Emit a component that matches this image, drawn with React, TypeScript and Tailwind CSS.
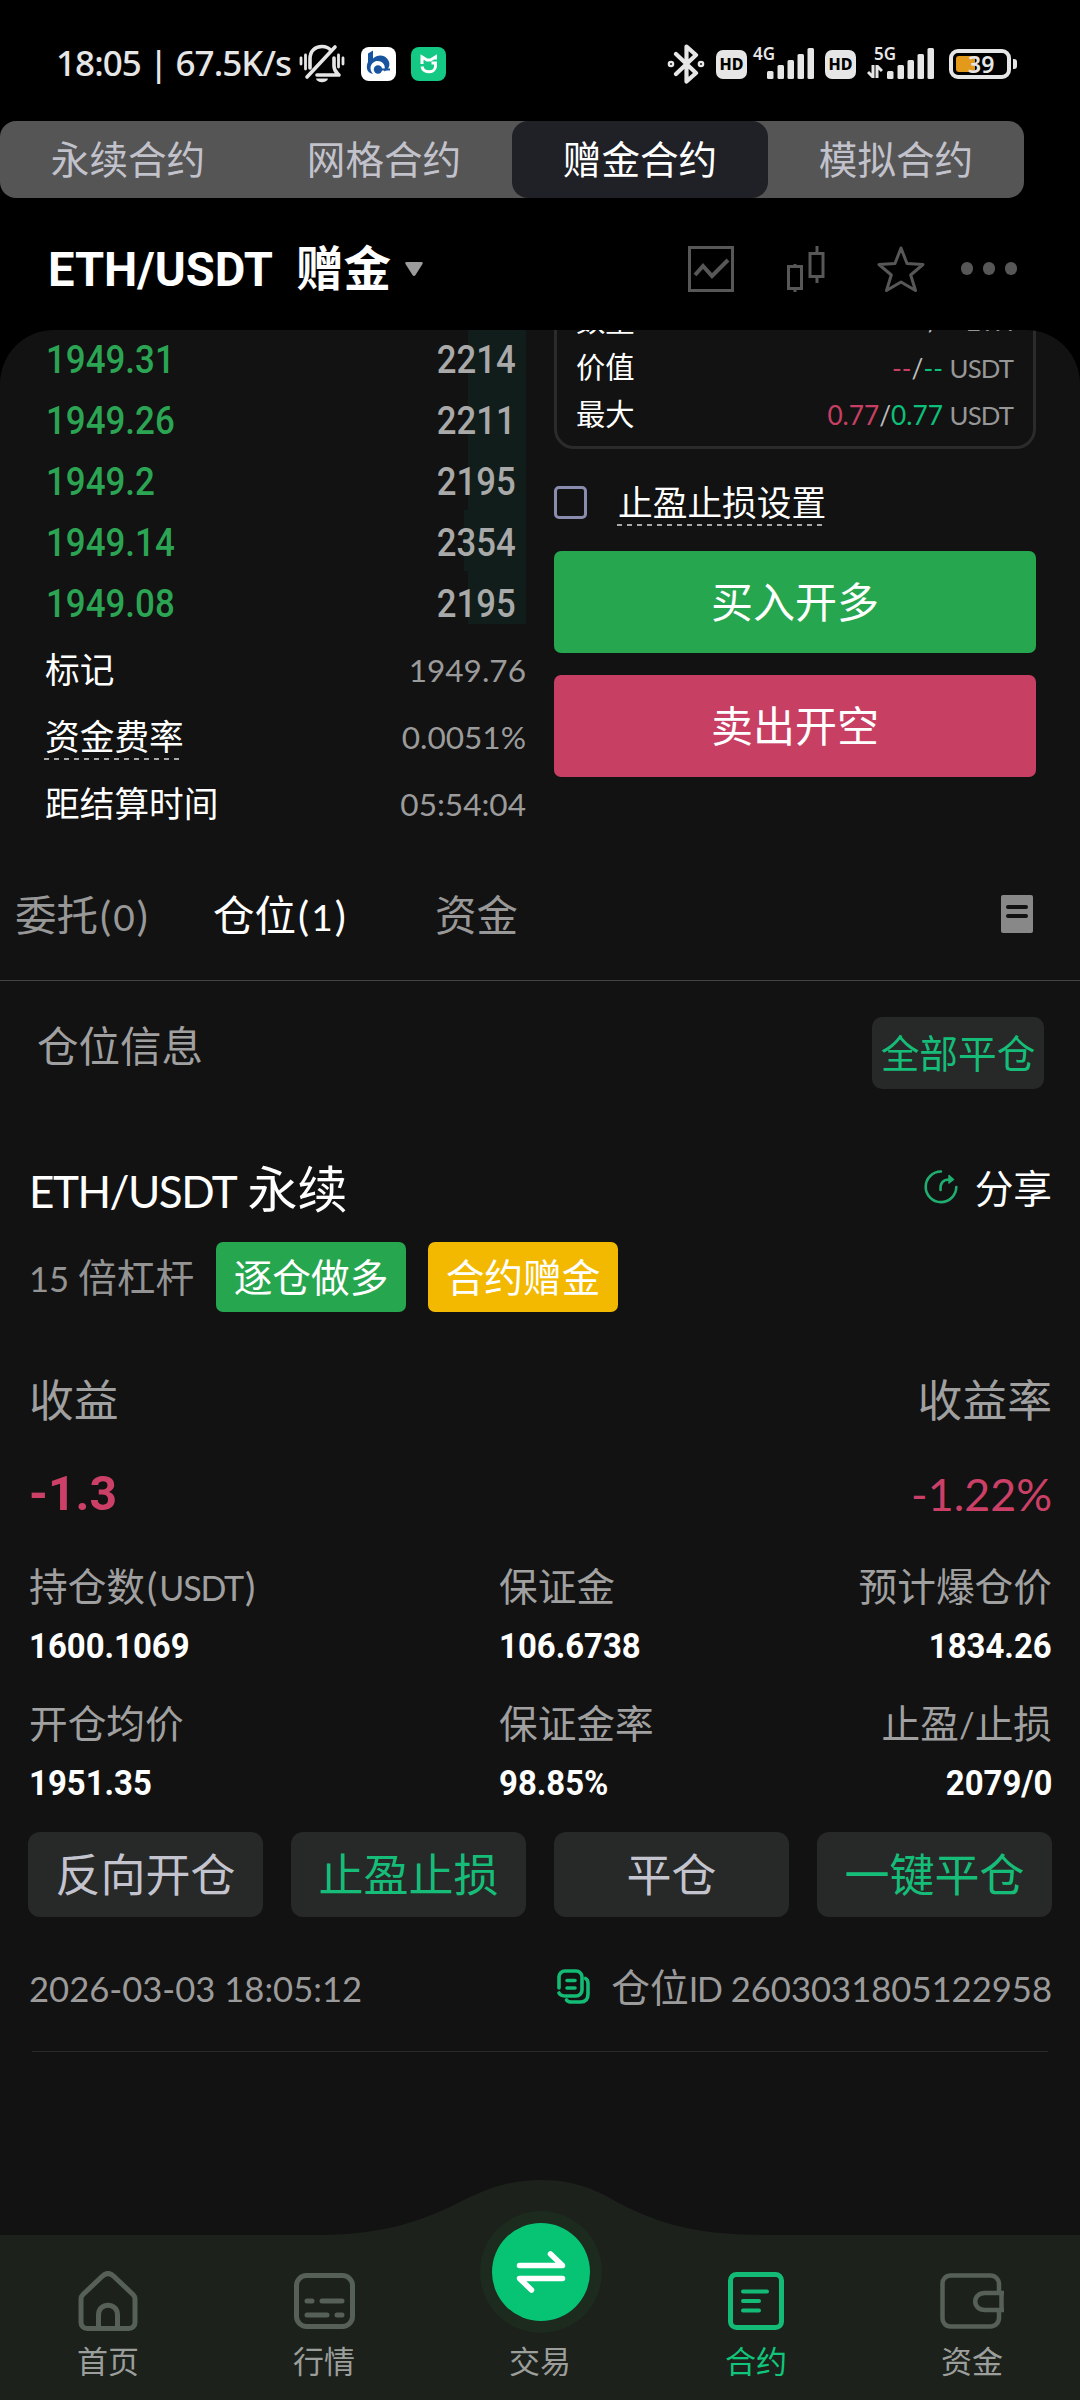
import React from "react";

const runStyles = {
  paren: "whitespace-pre px-[0.05em] font-['Lato'] text-[1em] leading-none",
  caps: "whitespace-pre font-['Lato'] text-[0.88em] leading-none tracking-[-0.034em]",
  digits: "whitespace-pre font-['Lato'] text-[0.895em] leading-none",
};

function runStyle(run: string) {
  if (/[()]/.test(run)) return runStyles.paren;
  if (/[A-Z]/.test(run)) return runStyles.caps;
  return runStyles.digits;
}

/** Mixed-script text: Latin runs are set in Lato, slightly smaller than the CJK glyphs. */
function T({ children }: { children: string }) {
  const runs = children.split(/([()]|[A-Z/]*[A-Z]|[\x20-\x27\x2a-\x40]+)/).filter(Boolean);
  return (
    <span>
      {runs.map((run, i) =>
        /^[\x20-\x7e]+$/.test(run) ? (
          <span key={i} className={runStyle(run)}>
            {run}
          </span>
        ) : (
          <React.Fragment key={i}>{run}</React.Fragment>
        ),
      )}
    </span>
  );
}

function StatusBar() {
  return (
    <div className="flex h-[121px] items-center pt-[7px] text-[#e6e6e6]">
      <span className="ml-[56px] w-[237px] whitespace-nowrap pb-[2px] font-['Noto_Sans'] text-[35px] font-medium leading-[40px] tracking-[-0.95px]">
        18:05 | 67.5K/s
      </span>
      <svg className="ml-[6px]" width="46" height="40" viewBox="0 0 46 40" fill="none" stroke="currentColor" strokeWidth="3.6" strokeLinecap="round">
        <path d="M11 24V15C11 7 16 2.5 23 2.5c4 0 7 1.5 9 4M35 14v8c0 5 2 6 5 9H18" strokeLinejoin="round" />
        <path d="M8 33 36 3" />
        <path d="M2 14v6M6.5 11v14M44 14v6M39.500 11v12" strokeWidth="2.800" />
        <path d="M17 34.500h12c-1 5-11 5-12 0z" fill="currentColor" stroke="none" />
      </svg>
      <svg className="ml-[16px]" width="35" height="34" viewBox="0 0 35 34">
        <rect width="35" height="34" rx="8" fill="#fff" />
        <path d="M7 6.500l5-3v8c4-4 11-4 14 0 4 4 3 11-3 13 3-7-3-12-9-10-5 2-6 8-2 12.500-7-1-7-8-5-12z" fill="#17539f" />
        <circle cx="17" cy="22.500" r="4.200" fill="#17539f" />
        <path d="M20 22.500h9" stroke="#17539f" strokeWidth="2" />
      </svg>
      <svg className="ml-[15px]" width="35" height="34" viewBox="0 0 35 34" fill="none">
        <rect width="35" height="34" rx="8" fill="#14c983" />
        <path d="M11 17V10l5 3h3.500l5-3v2.500M11 19.500c1 7 13 7 13.500 0V16h-4" stroke="#fff" strokeWidth="3" strokeLinejoin="miter" />
      </svg>
      <svg className="ml-[221px]" width="38" height="40" viewBox="0 0 38 40" fill="none" stroke="currentColor" strokeWidth="4.200" strokeLinejoin="round" strokeLinecap="round">
        <path d="M9 10l20 19-9.500 8.500V2.500L29 11 9 30" />
        <circle cx="4" cy="20" r="1.200" />
        <circle cx="34" cy="20" r="1.200" />
      </svg>
      <Hd className="ml-[11px]" />
      <div className="ml-[6px] flex h-[34px]">
        <span className="-mr-[8px] -mt-[4px] font-['Noto_Sans'] text-[17px] font-semibold leading-[22px]">4G</span>
        <Bars />
      </div>
      <Hd className="ml-[10px]" />
      <div className="ml-[12px] flex h-[34px] w-[67px] justify-end">
        <div className="-mr-[10px] -mt-[4px] w-[28px]">
          <div className="pl-[5px] font-['Noto_Sans'] text-[17px] font-semibold leading-[22px]">5G</div>
          <svg className="-ml-[2px]" width="16" height="13" viewBox="0 0 16 13" fill="none" stroke="currentColor" strokeWidth="3">
            <path d="M6 0v12L1 7M10 13V1l5 5" />
          </svg>
        </div>
        <Bars />
      </div>
      <div className="ml-[14px] flex items-center">
        <div className="relative flex h-[30px] w-[62px] items-center rounded-[9px] border-[4px] border-[#e6e6e6] pl-[3px]">
          <div className="h-[16px] w-[19px] rounded-[3px] bg-[#e39a1b]" />
          <span className="absolute left-[15px] top-[-1px] font-['Noto_Sans'] text-[23px] font-semibold leading-[24px]">39</span>
        </div>
        <div className="ml-[2px] h-[10px] w-[4px] rounded-r-[3px] bg-[#e6e6e6]" />
      </div>
    </div>
  );
}

function Hd({ className }: { className: string }) {
  return (
    <span
      className={
        "flex h-[29px] w-[31px] items-center justify-center rounded-[7px] bg-[#e6e6e6] font-['Noto_Sans'] text-[16px] font-extrabold leading-none text-black " +
        className
      }
    >
      HD
    </span>
  );
}

function Bars() {
  return (
    <svg className="mt-[1px]" width="48" height="31" viewBox="0 0 48 31" fill="currentColor">
      <rect x="0" y="23" width="6.500" height="8" rx="1.500" />
      <rect x="10.500" y="17" width="6.500" height="14" rx="1.500" />
      <rect x="20.500" y="12" width="6.500" height="19" rx="1.500" />
      <rect x="30.500" y="6" width="6.500" height="25" rx="1.500" />
      <rect x="40.500" y="0" width="6.500" height="31" rx="1.500" />
    </svg>
  );
}

const contractTabs = ["永续合约", "网格合约", "赠金合约", "模拟合约"];

function ContractTabs() {
  return (
    <div className="flex h-[77px] w-[1024px] overflow-hidden rounded-[16px] bg-[#555555]">
      {contractTabs.map((label, i) => (
        <div
          key={label}
          className={
            "flex-1 text-center text-[38.600px] leading-[73px] " +
            (i === 2 ? "rounded-[16px] bg-[#202127] text-white" : "text-[#c2c2cc]")
          }
        >
          {label}
        </div>
      ))}
    </div>
  );
}

function PairHeader() {
  return (
    <div className="flex h-[132px] items-center pt-[9px]">
      <span className="ml-[48px] w-[248px] whitespace-nowrap pt-[2px]">
        <span className="inline-block origin-left scale-x-[0.98] font-['Roboto'] text-[48px] font-bold leading-[60px]">ETH/USDT</span>
      </span>
      <span className="pb-[5px] text-[47.500px] font-bold leading-[60px] text-white">赠金</span>
      <svg className="ml-[14px]" width="18" height="14" viewBox="0 0 18 14">
        <path d="M1.500 0h15c1 0 1.500 1 1 2L10.500 13c-.8 1.300-2.200 1.300-3 0L.5 2C0 1 .5 0 1.500 0z" fill="#9c9c9c" />
      </svg>
      <div className="ml-auto mr-[63px] flex items-center text-[#575757]">
        <svg width="46" height="46" viewBox="0 0 46 46" fill="none" stroke="currentColor">
          <rect x="1.500" y="1.500" width="43" height="43" strokeWidth="3" />
          <path d="M7 29l8-9 9 10 16-16" strokeWidth="4" />
        </svg>
        <svg className="ml-[53px]" width="38" height="46" viewBox="0 0 38 46" fill="none" stroke="currentColor" strokeWidth="3">
          <rect x="1.500" y="20.500" width="13" height="22" />
          <path d="M8 18v3M8 43v3M30 0v7M30 31v6" />
          <rect x="23" y="7.500" width="13" height="23" />
        </svg>
        <svg className="ml-[52px]" width="48" height="46" viewBox="0 0 48 46" fill="none" stroke="currentColor" strokeWidth="3" strokeLinejoin="round">
          <path d="M24 2l6 15.500 16 1-12.300 10.500L38.500 44.500 24 36 9.500 44.500l4.800-15.500L2 18.500l16-1z" />
        </svg>
        <div className="ml-[36px] flex gap-[9.500px]">
          <i className="size-[12.500px] rounded-full bg-[#575757]" />
          <i className="size-[12.500px] rounded-full bg-[#575757]" />
          <i className="size-[12.500px] rounded-full bg-[#575757]" />
        </div>
      </div>
    </div>
  );
}

const bids = [
  { price: "1949.31", amount: "2214", depth: 58 },
  { price: "1949.26", amount: "2211", depth: 58 },
  { price: "1949.2", amount: "2195", depth: 58 },
  { price: "1949.14", amount: "2354", depth: 62 },
  { price: "1949.08", amount: "2195", depth: 58 },
];

const dashed =
  "bg-[repeating-linear-gradient(90deg,#a8a8a8_0_5px,transparent_5px_10px)] bg-[length:100%_2px] bg-bottom bg-no-repeat";

function OrderBook() {
  return (
    <div className="-mt-[3px] ml-[45px] w-[481px]">
      {bids.map((b, i) => (
        <div key={b.price} className="relative flex h-[61px] items-center justify-between pl-[1px] pr-[10px] pt-[5px]">
          <div
            className={"absolute right-0 top-0 bg-[#101d1a] " + (i === bids.length - 1 ? "h-[53px]" : "h-full")}
            style={{ width: b.depth }}
          />
          <span className="relative inline-block origin-left scale-x-[0.895] font-['Roboto'] text-[39px] font-medium text-[#2ba553]">{b.price}</span>
          <span className="relative inline-block origin-right scale-x-[0.89] font-['Roboto'] text-[39px] font-medium text-[#a9a9a9]">{b.amount}</span>
        </div>
      ))}
      <div className="mt-[2px]">
        <InfoRow label="标记" value="1949.76" />
        <InfoRow label="资金费率" value="0.0051%" underline />
        <InfoRow label="距结算时间" value="05:54:04" />
      </div>
    </div>
  );
}

function InfoRow({ label, value, underline }: { label: string; value: string; underline?: boolean }) {
  return (
    <div className="flex h-[67px] justify-between text-[34.700px] leading-[68px]">
      <span className="relative">
        {label}
        {underline && <span className={"absolute bottom-[8px] left-[-1px] h-[2px] w-[136px] " + dashed} />}
      </span>
      <span className="-mt-[1px] text-[35.300px] text-[#9b9b9b]">
        <T>{value}</T>
      </span>
    </div>
  );
}

function LimitRow({ label, long, short, unit }: { label: string; long: string; short: string; unit: string }) {
  return (
    <div className="flex justify-between text-[29.300px] leading-[47px]">
      <span>{label}</span>
      <span className="text-[#979797]">
        <span className="text-[#c83f64]">
          <T>{long}</T>
        </span>
        <span className="text-[#bdbdbd]">
          <T>/</T>
        </span>
        <span className="text-[#0cc07a]">
          <T>{short}</T>
        </span>
        <T>{" " + unit}</T>
      </span>
    </div>
  );
}

function TradeForm() {
  return (
    <div className="ml-[28px] w-[482px]">
      <div className="-mt-[38px] h-[157px] rounded-[20px] border-[3px] border-[#2b2b2b] pl-[19px] pr-[20px]">
        <LimitRow label="数量" long="--" short="--" unit="ETH" />
        <LimitRow label="价值" long="--" short="--" unit="USDT" />
        <LimitRow label="最大" long="0.77" short="0.77" unit="USDT" />
      </div>
      <div className="mt-[32px] flex h-[45px] items-start">
        <span className="mt-[5px] size-[33px] rounded-[5px] border-[3px] border-[#8a8cae]" />
        <span className="relative ml-[31px] text-[34.700px] leading-[40px]">
          止盈止损设置
          <span className={"absolute bottom-[-5px] left-[-1px] h-[2px] w-[206px] " + dashed} />
        </span>
      </div>
      <button className="mt-[25px] block h-[102px] w-full rounded-[7px] bg-[#27a650] pb-[4px] text-[42px] leading-[98px]">买入开多</button>
      <button className="mt-[22px] block h-[102px] w-full rounded-[7px] bg-[#c74064] pb-[4px] text-[42px] leading-[98px]">卖出开空</button>
    </div>
  );
}

function PositionTabs() {
  return (
    <div className="flex h-[133px] items-center border-b-[1.500px] border-[#434343] pb-[2px] text-[41.500px] text-[#989898]">
      <span className="ml-[15px] w-[198px]">
        <T>委托(0)</T>
      </span>
      <span className="w-[222px] text-white">
        <T>仓位(1)</T>
      </span>
      <span>资金</span>
      <div className="ml-auto mr-[47px] mt-[2px] flex h-[38px] w-[32px] flex-col items-center gap-[5px] rounded-[2px] bg-[#888888] pt-[10px]">
        <i className="h-[4px] w-[22px] rounded-full bg-[#121212]" />
        <i className="h-[4px] w-[22px] rounded-full bg-[#121212]" />
      </div>
    </div>
  );
}

const stats = [
  ["持仓数(USDT)", "1600.1069"],
  ["保证金", "106.6738"],
  ["预计爆仓价", "1834.26"],
  ["开仓均价", "1951.35"],
  ["保证金率", "98.85%"],
  ["止盈/止损", "2079/0"],
];

function Position() {
  return (
    <div className="ml-[29px] mr-[28px]">
      <div className="mt-[67px] flex h-[60px] items-center justify-between">
        <span className="pb-[1px] text-[50px] leading-[60px]">
          <T>ETH/USDT 永续</T>
        </span>
        <span className="flex items-center text-[38.700px] leading-[60px]">
          <svg className="mr-[17px] mt-[2px]" width="34" height="34" viewBox="0 0 34 34" fill="none" stroke="#1fae70" strokeWidth="2.600" strokeLinecap="round" strokeLinejoin="round">
            <path d="M17 1.500A15.300 15.300 0 1 0 32.300 17" />
            <path d="M16.500 20c-.5-7 2.500-10.500 9-10.500" />
            <path d="M25 5.500l4.500 4-4.500 3.500z" fill="#1fae70" strokeWidth="1.500" />
          </svg>
          分享
        </span>
      </div>
      <div className="mt-[26px] flex h-[70px] text-[38.700px] leading-[66px]">
        <span className="w-[187px] text-[#939393]">
          <T>15 倍杠杆</T>
        </span>
        <span className="w-[190px] rounded-[7px] bg-[#27a650] text-center">逐仓做多</span>
        <span className="ml-[22px] w-[190px] rounded-[7px] bg-[#f2b900] text-center">合约赠金</span>
      </div>
      <div className="mt-[56px] flex justify-between text-[44.800px] leading-[60px] text-[#a0a0a0]">
        <span>收益</span>
        <span>收益率</span>
      </div>
      <div className="mt-[31px] flex h-[60px] justify-between text-[50px] leading-[60px] text-[#cc4068]">
        <span className="origin-left scale-x-[0.98] font-['Roboto'] text-[49px] font-bold leading-[69px]">-1.3</span>
        <T>-1.22%</T>
      </div>
      <div className="mt-[40px] grid grid-cols-[470px_320px_1fr] gap-y-[25px]">
        {stats.map(([label, value], i) => (
          <div key={label} className={"whitespace-nowrap " + (i % 3 === 2 ? "-ml-[40px] text-right" : "")}>
            <div className="h-[50px] text-[38.700px] leading-[50px] text-[#a0a0a0]">
              <T>{label}</T>
            </div>
            <div className={"mt-[12px] flex h-[50px] items-center pt-[1px] " + (i % 3 === 2 ? "justify-end" : "")}>
              <span
                className={
                  "inline-block scale-x-[0.94] font-['Roboto'] text-[35px] font-bold leading-[50px] " +
                  (i % 3 === 2 ? "origin-right" : "origin-left")
                }
              >
                {value}
              </span>
            </div>
          </div>
        ))}
      </div>
      <div className="-ml-[1px] mt-[24px] flex gap-[28px]">
        {["反向开仓", "止盈止损", "平仓", "一键平仓"].map((label, i) => (
          <button
            key={label}
            className={
              "h-[85px] flex-1 rounded-[12px] bg-[#272828] pb-[4px] text-[45px] leading-[81px] " +
              (i % 2 ? "text-[#16bd78]" : "text-[#c4c4cf]")
            }
          >
            {label}
          </button>
        ))}
      </div>
      <div className="mt-[43px] flex h-[50px] justify-between text-[38.700px] leading-[50px] text-[#9b9b9b]">
        <T>2026-03-03 18:05:12</T>
        <span className="flex items-center">
          <svg className="mr-[21px] mt-[2px]" width="33" height="35" viewBox="0 0 33 35" fill="none" stroke="#13bb75" strokeWidth="3.600" strokeLinecap="round" strokeLinejoin="round">
            <path d="M2 19V8a6 6 0 0 1 6-6h11a6 6 0 0 1 6 6v13a6 6 0 0 1-6 6H9c-4 0-6-1-7-3" />
            <path d="M10 11.500h8M10 19h8" />
            <path d="M28.500 9.500c2 1 2.500 2.500 2.500 5V25c0 5-2.500 8-7.500 8h-9c-2.500 0-4-.5-5-2" />
          </svg>
          <T>仓位ID 2603031805122958</T>
        </span>
      </div>
      <div className="ml-[3px] mr-[4px] mt-[41px] h-px bg-[#2a2a2a]" />
    </div>
  );
}

function NavItem({ label, active, children }: { label: string; active?: boolean; children?: React.ReactNode }) {
  return (
    <div className={"flex flex-1 flex-col items-center pt-[91px] " + (active ? "text-[#14bb76]" : "text-[#566056]")}>
      <div className="flex h-[60px] items-center">{children}</div>
      <span className={"mt-[11px] text-[31px] leading-[36px] " + (active ? "text-[#11c57b]" : "text-[#9b9e9b]")}>{label}</span>
    </div>
  );
}

function BottomNav() {
  return (
    <div className="relative flex h-[220px] bg-[#121212]">
      <svg className="absolute inset-0" width="1080" height="220" viewBox="0 0 1080 220" fill="#1c211c">
        <path d="M0 55H315C375 55 415 45 460 22C490 7 512 0 541 0C570 0 592 7 617 22C660 45 700 55 765 55H1080V220H0z" />
      </svg>
      <div className="relative flex flex-1">
        <NavItem label="首页">
          <svg width="60" height="60" viewBox="0 0 60 60" fill="none" stroke="currentColor" strokeWidth="5">
            <path d="M3 28v23.500a6 6 0 0 0 6 6h42a6 6 0 0 0 6-6V28c0-2-.5-3-2-4.500L36 5.500c-4-4-8-4-12 0L5 23.500C3.500 25 3 26 3 28z" />
            <path d="M20.500 57V44c0-13 19-13 19 0v13" />
          </svg>
        </NavItem>
        <NavItem label="行情">
          <svg width="61" height="56" viewBox="0 0 61 56" fill="none" stroke="currentColor" strokeWidth="5">
            <rect x="2.500" y="2.500" width="56" height="51" rx="10" />
            <path d="M13 28h5M28 28h20M13 42h20M43 42h5" strokeLinecap="round" />
          </svg>
        </NavItem>
        <NavItem label="交易" />
        <NavItem label="合约" active>
          <svg width="56" height="58" viewBox="0 0 56 58" fill="none" stroke="currentColor" strokeWidth="5">
            <rect x="2.500" y="2.500" width="51" height="53" rx="6" />
            <path d="M15 19.500h24M15 29h16M15 38.500h16" strokeWidth="4" strokeLinecap="round" />
          </svg>
        </NavItem>
        <NavItem label="资金">
          <svg width="64" height="56" viewBox="0 0 64 56" fill="none" stroke="currentColor" strokeWidth="4.500">
            <path d="M59 18v-7a8.500 8.500 0 0 0-8.500-8.500h-40A8 8 0 0 0 2.500 11v34a8 8 0 0 0 8 8.500h40A8.500 8.500 0 0 0 59 45v-7" />
            <path d="M64 20H45c-13 0-13 17 0 17h19M61.500 20v17" />
          </svg>
        </NavItem>
      </div>
      <div className="absolute left-[480px] top-[31px] flex size-[122px] items-center justify-center rounded-full bg-[#1d2b1e]">
        <div className="flex size-[98px] items-center justify-center rounded-full bg-[#07c475]">
          <svg width="50" height="44" viewBox="0 0 50 44" fill="none" stroke="#fff" strokeWidth="5.500" strokeLinecap="round" strokeLinejoin="round">
            <path d="M3.500 15.500h43L34.500 4M46.500 28.500h-43L15.500 40" />
          </svg>
        </div>
      </div>
    </div>
  );
}

export default function App() {
  return (
    <div className="flex h-[2400px] w-[1080px] flex-col overflow-hidden bg-black font-['Noto_Sans_CJK_SC',sans-serif] text-white">
      <StatusBar />
      <ContractTabs />
      <PairHeader />
      <div className="flex min-h-0 flex-1 flex-col overflow-hidden rounded-t-[54px] bg-[#121212]">
        <div className="flex h-[518px] shrink-0">
          <OrderBook />
          <TradeForm />
        </div>
        <PositionTabs />
        <div className="flex items-start justify-between pl-[37px] pr-[36px] pt-[36px]">
          <span className="text-[41.500px] leading-[54px] text-[#a0a0a0]">仓位信息</span>
          <button className="h-[72px] w-[172px] rounded-[10px] bg-[#272828] pb-[4px] text-[38.700px] leading-[68px] text-[#16bd78]">
            全部平仓
          </button>
        </div>
        <Position />
      </div>
      <BottomNav />
    </div>
  );
}
